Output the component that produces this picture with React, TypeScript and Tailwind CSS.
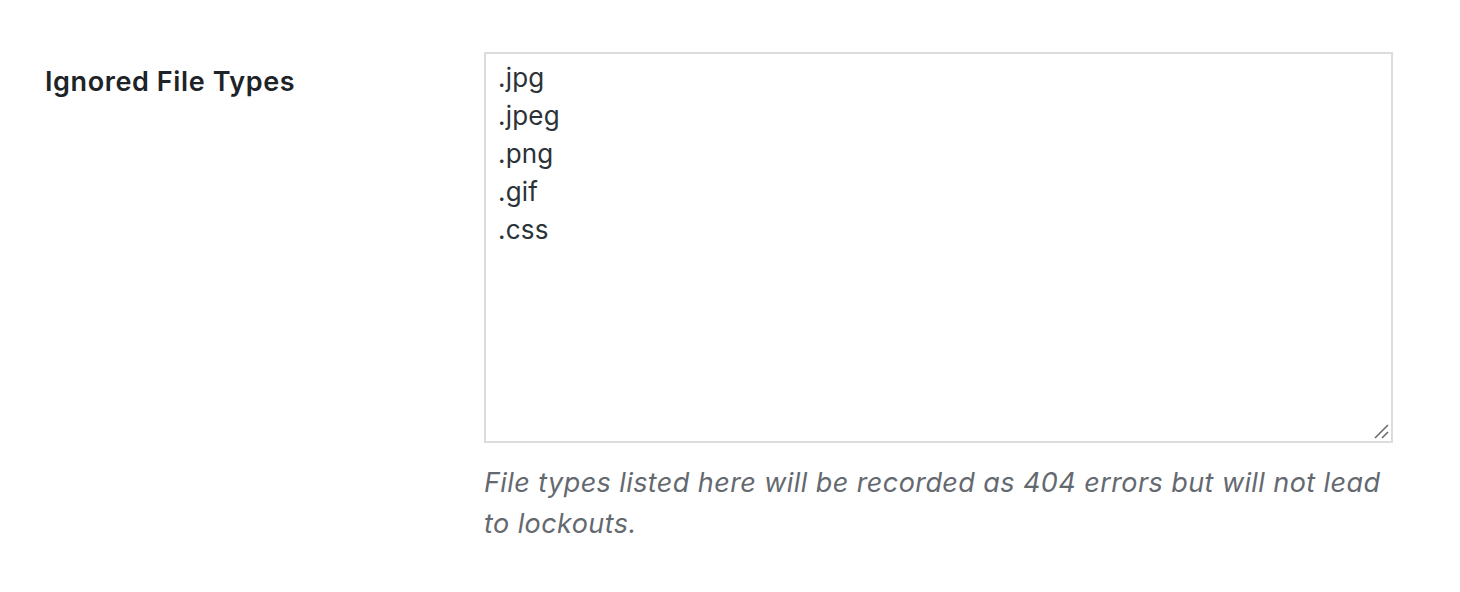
export default function App() {
  return (
    <div className="w-[1460px] h-[592px] bg-white font-['Inter',sans-serif] text-[#1d2327]">
      <div className="flex pt-[52px] pl-[45px]">
        <div className="w-[439px] pt-[14px]">
          <span className="text-[27px] leading-[32px] font-semibold tracking-[0.6px]">Ignored File Types</span>
        </div>
        <div className="w-[909px]">
          <div className="relative h-[391px] border-2 border-[#dcdcde] bg-white px-[12px] pt-[5px] text-[26px] leading-[38px] tracking-[0.2px] text-[#2c3338]">
            <div>.jpg</div>
            <div>.jpeg</div>
            <div>.png</div>
            <div>.gif</div>
            <div>.css</div>
            <svg className="absolute right-[1px] bottom-[1px]" width="18" height="18" viewBox="0 0 18 18">
              <line x1="3" y1="16" x2="16" y2="3" stroke="#6b6b6b" strokeWidth="1.6" />
              <line x1="10" y1="16" x2="16" y2="10" stroke="#6b6b6b" strokeWidth="1.6" />
            </svg>
          </div>
          <p className="mt-[19px] text-[27px] leading-[41px] italic tracking-[0.42px] text-[#646970]">
            File types listed here will be recorded as 404 errors but will not lead to lockouts.
          </p>
        </div>
      </div>
    </div>
  );
}
